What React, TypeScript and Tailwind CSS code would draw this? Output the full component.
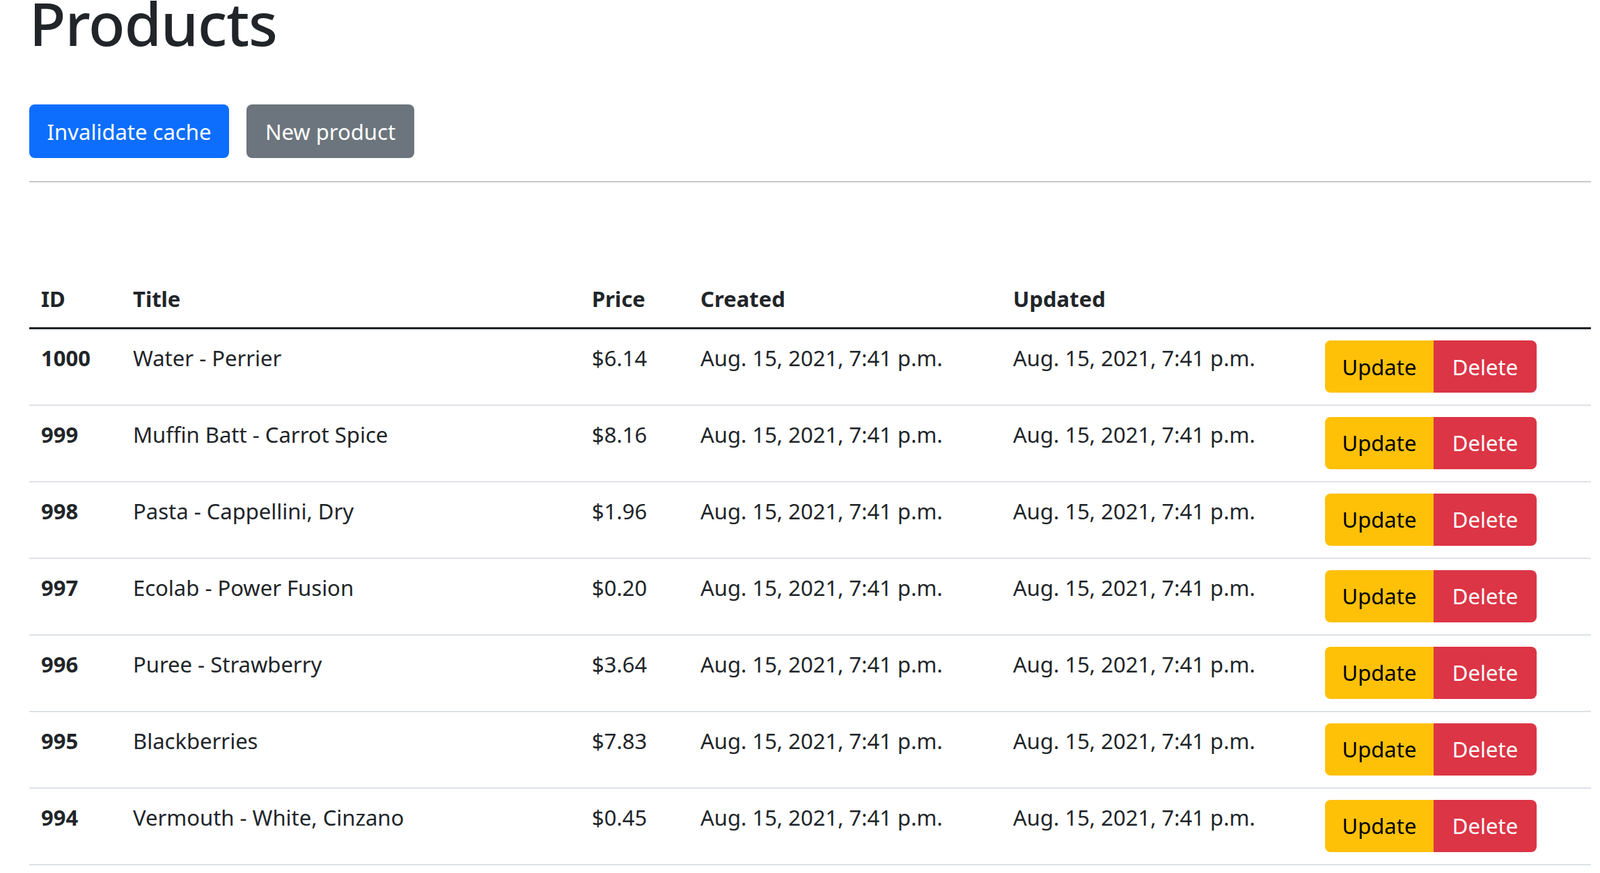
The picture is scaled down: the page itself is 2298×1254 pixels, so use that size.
import React from 'react';

interface Product {
  id: number;
  title: string;
  price: string;
}

const products: Product[] = [
  { id: 1000, title: 'Water - Perrier', price: '$6.14' },
  { id: 999, title: 'Muffin Batt - Carrot Spice', price: '$8.16' },
  { id: 998, title: 'Pasta - Cappellini, Dry', price: '$1.96' },
  { id: 997, title: 'Ecolab - Power Fusion', price: '$0.20' },
  { id: 996, title: 'Puree - Strawberry', price: '$3.64' },
  { id: 995, title: 'Blackberries', price: '$7.83' },
  { id: 994, title: 'Vermouth - White, Cinzano', price: '$0.45' },
];

const stamp = 'Aug. 15, 2021, 7:41 p.m.';

export default function App() {
  return (
    <div className="min-h-screen bg-white text-[#212529] pl-[42px] pr-[13px] text-[31px] leading-[46px] font-['Liberation_Sans',sans-serif]">
      <h1 className="text-[86px] leading-[86px] font-medium -mt-[10px] mb-[74px] tracking-[-1px]">Products</h1>
      <div className="flex gap-[25px]">
        <button className="h-[77px] w-[287px] rounded-[8px] bg-[#0d6efd] text-white">Invalidate cache</button>
        <button className="h-[77px] w-[241px] rounded-[8px] bg-[#6c757d] text-white">New product</button>
      </div>
      <hr className="mt-[33px] border-t-[2px] border-[#c8c9ca]" />
      <table className="mt-[144px] w-full border-collapse table-fixed">
        <thead>
          <tr className="border-b-[3px] border-[#212529] text-left">
            <th className="w-[149px] px-[17px] pb-[18px] font-bold">ID</th>
            <th className="w-[659px] pb-[18px] font-bold">Title</th>
            <th className="w-[156px] pb-[18px] font-bold">Price</th>
            <th className="w-[449px] pb-[18px] font-bold">Created</th>
            <th className="w-[448px] pb-[18px] font-bold">Updated</th>
            <th className="pb-[18px]"></th>
          </tr>
        </thead>
        <tbody>
          {products.map((p) => (
            <tr key={p.id} className="border-b-[2px] border-[#dee2e6] h-[110px] align-top">
              <td className="px-[17px] pt-[18px] font-bold">{p.id}</td>
              <td className="pt-[18px]">{p.title}</td>
              <td className="pt-[18px]">{p.price}</td>
              <td className="pt-[18px]">{stamp}</td>
              <td className="pt-[18px]">{stamp}</td>
              <td className="pt-[16px]">
                <div className="flex">
                  <button className="h-[75px] w-[156px] rounded-l-[8px] bg-[#ffc107] text-black">Update</button>
                  <button className="h-[75px] w-[148px] rounded-r-[8px] bg-[#dc3545] text-white">Delete</button>
                </div>
              </td>
            </tr>
          ))}
        </tbody>
      </table>
    </div>
  );
}
